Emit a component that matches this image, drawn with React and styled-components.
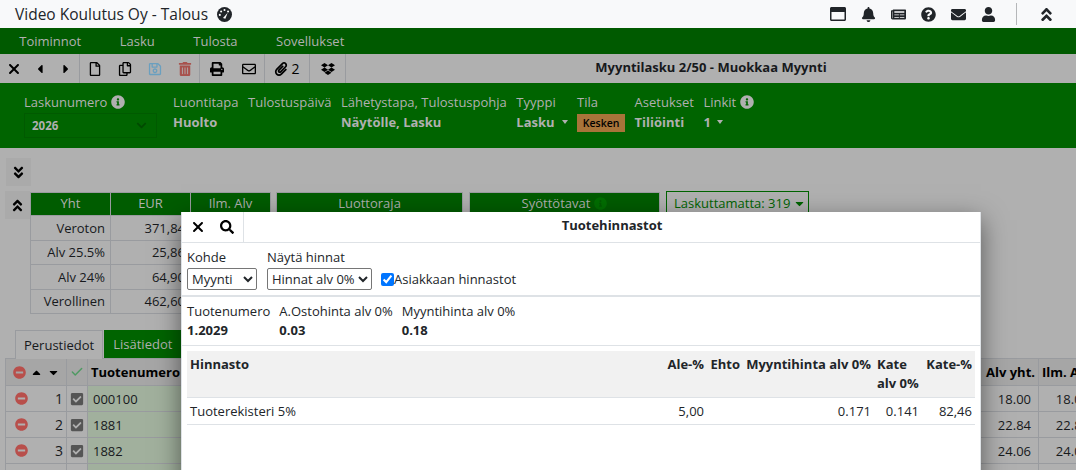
import React from 'react'
import styled, {createGlobalStyle} from 'styled-components'
import {
    FaRegWindowMaximize, FaBell, FaNewspaper, FaQuestionCircle, FaEnvelope, FaUser,
    FaAngleDoubleUp, FaAngleDoubleDown, FaCaretLeft, FaCaretRight, FaRegFile, FaRegCopy, FaRegSave,
    FaTrashAlt, FaPrint, FaRegEnvelope, FaPaperclip, FaDropbox, FaInfoCircle, FaCaretDown, FaCaretUp,
    FaSearch, FaMinusCircle, FaCheckSquare, FaChevronDown
} from 'react-icons/fa'
import {FaXmark} from 'react-icons/fa6'
import {Check} from 'lucide-react'

// everything under the top bar sits behind the modal backdrop, so the colours here are the dimmed ones
const dim = {
    page: '#b0b0b0',
    line: '#999b9f',
    head: '#a6a6a6',
    text: '#17191c',
    menu: '#005a00',
    panel: '#006400',
    tableHead: '#005c00',
    red: '#b84f4b'
}

const GlobalStyle = createGlobalStyle`
    html, body {
        margin: 0;
        padding: 0;
        overflow: hidden;
    }
    body {
        font-family: "Open Sans", "Liberation Sans", sans-serif;
        font-size: 13px;
        color: ${dim.text};
    }
    * {
        box-sizing: border-box;
    }
`

const Page = styled.div`
    position: relative;
    width: 1076px;
    height: 470px;
    overflow: hidden;
    background: ${dim.page};
`

const TopBar = styled.header`
    height: 28px;
    background: #f8f9fa;
    display: flex;
    align-items: center;
    padding-left: 15px;
`

const AppTitle = styled.div`
    font-size: 15.5px;
    color: #212529;
    display: flex;
    align-items: center;
    gap: 9px;
    flex: 1;
`

const TopIcons = styled.div`
    display: flex;
    align-items: center;
`

const TopIcon = styled.span`
    width: 30px;
    display: flex;
    justify-content: center;
    font-size: ${props => props.$size || 15}px;
    color: #212529;
`

const TopDivider = styled.div`
    width: 1px;
    height: 22px;
    background: #b5b7b9;
    margin: 0 21px 0 13px;
`

const CollapseTop = styled.span`
    display: flex;
    width: 17px;
    margin-right: 21px;
    font-size: 17px;
    color: #212529;
`

const Menu = styled.nav`
    height: 26px;
    background: ${dim.menu};
    display: flex;
    align-items: center;
`

const MenuItem = styled.span`
    color: ${dim.page};
    padding: 0 19.25px;
    font-size: 13px;
`

const Toolbar = styled.div`
    height: 29px;
    display: flex;
`

const ToolGroup = styled.div`
    display: flex;
    border-right: 1px solid ${dim.line};
`

const ToolButton = styled.span`
    width: ${props => props.$w}px;
    display: flex;
    align-items: center;
    justify-content: center;
    gap: 3px;
    font-size: ${props => props.$size || 14}px;
    color: ${props => props.$color || '#000'};
`

const ToolTitle = styled.div`
    flex: 1;
    text-align: center;
    font-weight: 700;
    line-height: 26px;
    font-size: 13px;
`

const HeaderPanel = styled.section`
    height: 65px;
    background: ${dim.panel};
    color: ${dim.page};
    display: flex;
    gap: 9.5px;
    padding: 10px 0 0 24px;
`

const Field = styled.div`
    display: flex;
    flex-direction: column;
    margin-right: ${props => props.$mr || 0}px;
`

const FieldLabel = styled.div`
    font-size: 13px;
    line-height: 18px;
    display: flex;
    align-items: center;
    gap: 4px;
    white-space: nowrap;
    svg {
        font-size: 14px;
    }
`

const FieldValue = styled.div`
    font-weight: 700;
    font-size: 13px;
    line-height: 20px;
    margin-top: 1px;
    display: flex;
    align-items: center;
    white-space: nowrap;
`

const Caret = styled.span`
    display: inline-block;
    margin-left: ${props => props.$ml || 6}px;
    border-top: 4px solid ${dim.page};
    border-left: 3.5px solid transparent;
    border-right: 3.5px solid transparent;
`

const YearSelect = styled.div`
    width: 133px;
    height: 25px;
    margin-top: 2px;
    border: 1px solid #005a00;
    display: flex;
    align-items: center;
    justify-content: space-between;
    padding: 0 9px 0 7px;
    font-size: 11.5px;
    font-weight: 700;
    svg {
        color: #004a00;
        font-size: 11px;
    }
`

const StatusBadge = styled.span`
    width: 48px;
    height: 18px;
    margin-top: 3px;
    background: #a8743a;
    color: #000;
    font-size: 10.5px;
    font-weight: 600;
    display: flex;
    align-items: center;
    justify-content: center;
`

const Content = styled.main`
    padding: 10px 0 0 5px;
`

const ChevronButton = styled.div`
    width: 25px;
    height: 28px;
    margin-left: ${props => props.$ml || 0}px;
    background: #aaaaaa;
    display: flex;
    align-items: center;
    justify-content: center;
    font-size: 15px;
    color: #000;
`

const SummaryRow = styled.div`
    display: flex;
    margin-top: 5px;
    align-items: flex-start;
`

const SummaryTable = styled.table`
    border-collapse: collapse;
    margin: 1px 5px 0 0;
    table-layout: fixed;
    width: 240px;
    td, th {
        border: 1px solid ${dim.line};
        width: 80px;
        font-size: 13px;
        padding: 0 5px;
        text-align: right;
        height: 24.5px;
        font-weight: 400;
        white-space: nowrap;
    }
    th {
        height: 23px;
        padding-bottom: 2px;
        background: ${dim.tableHead};
        color: ${dim.page};
        text-align: center;
    }
`

const SideBox = styled.div`
    width: ${props => props.$w}px;
    margin: 1px 6px 0 0;
    height: 122px;
    border: 1px solid ${dim.line};
`

const SideBoxHead = styled.div`
    height: 23px;
    padding-bottom: 3px;
    background: ${dim.tableHead};
    color: ${dim.page};
    font-size: 13px;
    display: flex;
    align-items: center;
    justify-content: center;
    gap: 4px;
    svg {
        font-size: 13px;
        color: #006e00;
    }
`

const UnbilledButton = styled.div`
    width: 143px;
    height: 26px;
    border: 1px solid ${dim.panel};
    color: ${dim.panel};
    font-size: 13px;
    display: flex;
    align-items: center;
    gap: 3px;
    padding: 0 0 2px 7px;
`

const Tabs = styled.div`
    display: flex;
    align-items: flex-end;
    gap: 1px;
    height: 29px;
    margin: 15px 0 0 10px;
`

const Tab = styled.div`
    height: ${props => props.$active ? 29 : 28}px;
    margin-bottom: ${props => props.$active ? -1 : 0}px;
    padding: 0 ${props => props.$active ? 8 : 9}px;
    display: flex;
    align-items: center;
    font-size: 13px;
    background: ${props => props.$active ? dim.page : dim.panel};
    color: ${props => props.$active ? dim.text : dim.page};
    border: ${props => props.$active ? `1px solid ${dim.line}` : 'none'};
    border-bottom: none;
`

const DataTable = styled.table`
    border-collapse: collapse;
    table-layout: fixed;
    width: 1089px;
    td, th {
        border: 1px solid ${dim.line};
        font-size: 13px;
        height: 26px;
        padding: 0 3px;
        white-space: nowrap;
        overflow: hidden;
    }
    th {
        background: ${dim.head};
        height: 27px;
        font-weight: 700;
        text-align: left;
        color: #000;
    }
    th:nth-child(4) {
        text-align: right;
    }
`

const CheckHead = styled.th`
    svg {
        display: block;
        margin: 0 auto;
        color: #4f9a63;
    }
`

const HeadControls = styled.div`
    display: flex;
    align-items: center;
    justify-content: space-between;
    padding: 0 3px 0 4px;
    font-size: 13px;
    svg:first-child {
        color: ${dim.red};
        font-size: 13px;
    }
`

const RowControls = styled.div`
    display: flex;
    align-items: center;
    justify-content: space-between;
    padding: 0 0 0 6px;
    font-size: 14px;
    svg {
        color: ${dim.red};
        font-size: 13px;
    }
`

const CheckCell = styled.td`
    text-align: center;
    svg {
        display: block;
        margin: 0 auto;
        font-size: 14px;
        color: #555;
    }
`

const InputCell = styled.td`
    background: #a1b09d;
    padding-left: 5px !important;
    font-size: 13px;
`

const NumCell = styled.td`
    text-align: right;
    padding-right: 7px !important;
    &:last-child {
        padding-right: 5px !important;
    }
`

const Modal = styled.div`
    position: absolute;
    top: 212px;
    left: 181px;
    width: 800px;
    height: 300px;
    background: #fff;
    color: #212529;
    border: 1px solid #dee2e6;
    border-top: none;
    box-shadow: 0 8px 24px rgba(0, 0, 0, 0.5);
`

const ModalHeader = styled.div`
    height: 31px;
    display: flex;
    border-bottom: 1px solid #dee2e6;
`

const ModalTools = styled.div`
    width: 62px;
    display: flex;
    align-items: center;
    border-right: 1px solid #dee2e6;
    padding-left: 8px;
    gap: 14px;
    font-size: 14px;
    color: #000;
`

const ModalTitle = styled.div`
    flex: 1;
    text-align: center;
    font-weight: 700;
    font-size: 13px;
    line-height: 27px;
`

const FilterRow = styled.div`
    height: 54px;
    display: flex;
    align-items: flex-end;
    gap: 10px;
    padding: 0 5px 5px;
    border-bottom: 2px solid #dee2e6;
`

const FilterField = styled.label`
    display: flex;
    flex-direction: column;
    font-size: 13px;
    line-height: 18px;
`

const PriceSelect = styled.select`
    width: ${props => props.$w}px;
    height: 22px;
    font-family: inherit;
    font-size: 13px;
    padding: 0;
    margin-top: 2px;
    background: #fff;
    border: 1px solid #767676;
    border-radius: 2px;
    color: #212529;
`

const CheckLabel = styled.label`
    display: flex;
    align-items: center;
    height: 22px;
    margin-left: -1px;
    font-size: 13px;
    input {
        margin: 0;
        width: 13px;
        height: 13px;
    }
`

const InfoRow = styled.div`
    height: 49px;
    display: flex;
    gap: 9px;
    padding: 5px 5px 0;
    border-bottom: 1px solid #dee2e6;
`

const InfoField = styled.div`
    font-size: 13px;
    line-height: 18px;
    b {
        display: block;
        line-height: 20px;
    }
`

const PriceWrap = styled.div`
    padding: 5px 5px 0;
`

const PriceTable = styled.table`
    width: 788px;
    border-collapse: collapse;
    table-layout: fixed;
    th {
        background: #f1f1f1;
        color: #212529;
        font-size: 13px;
        font-weight: 700;
        line-height: 19px;
        height: 46px;
        padding: 4px 3px 2px;
        vertical-align: top;
        text-align: right;
        border-bottom: 1px solid #dee2e6;
    }
    td {
        font-size: 13px;
        height: 27px;
        padding: 3px;
        text-align: right;
        border-bottom: 1px solid #dee2e6;
    }
    th:first-child, td:first-child {
        text-align: left;
    }
`

const KateHead = styled.th`
    && {
        text-align: left;
    }
`

const summary = [
    ['Veroton', '371,84'],
    ['Alv 25.5%', '25,86'],
    ['Alv 24%', '64,90'],
    ['Verollinen', '462,60']
]

const rows = [
    {n: 1, code: '000100', alv: '18.00', net: '18.00'},
    {n: 2, code: '1881', alv: '22.84', net: '22.84'},
    {n: 3, code: '1882', alv: '24.06', net: '24.06'},
    {n: 4, code: '1883', alv: '24.06', net: '24.06'}
]

function DashIcon() {
    return (
        <svg width="15" height="15" viewBox="0 0 16 16">
            <circle cx="8" cy="8" r="8" fill="#212529" />
            <circle cx="8" cy="3.2" r="1.1" fill="#fff" />
            <circle cx="4.4" cy="4.8" r="1.1" fill="#fff" />
            <circle cx="11.8" cy="4.8" r="1.1" fill="#fff" />
            <circle cx="3" cy="8.4" r="1.1" fill="#fff" />
            <path d="M6.4 11.8 L11.4 6 L8.9 12.6 Z" fill="#fff" />
        </svg>
    )
}

function App() {
    return (
        <Page>
            <GlobalStyle />
            <TopBar>
                <AppTitle>Video Koulutus Oy - Talous <DashIcon /></AppTitle>
                <TopIcons>
                    <TopIcon $size={16}><FaRegWindowMaximize /></TopIcon>
                    <TopIcon><FaBell /></TopIcon>
                    <TopIcon><FaNewspaper /></TopIcon>
                    <TopIcon><FaQuestionCircle /></TopIcon>
                    <TopIcon><FaEnvelope /></TopIcon>
                    <TopIcon><FaUser /></TopIcon>
                </TopIcons>
                <TopDivider />
                <CollapseTop><FaAngleDoubleUp /></CollapseTop>
            </TopBar>

            <Menu>
                <MenuItem>Toiminnot</MenuItem>
                <MenuItem>Lasku</MenuItem>
                <MenuItem>Tulosta</MenuItem>
                <MenuItem>Sovellukset</MenuItem>
            </Menu>

            <Toolbar>
                <ToolGroup>
                    <ToolButton $w={27} $size={16}><FaXmark /></ToolButton>
                    <ToolButton $w={26}><FaCaretLeft /></ToolButton>
                    <ToolButton $w={26}><FaCaretRight /></ToolButton>
                </ToolGroup>
                <ToolGroup>
                    <ToolButton $w={30}><FaRegFile /></ToolButton>
                    <ToolButton $w={30}><FaRegCopy /></ToolButton>
                    <ToolButton $w={30} $color="#6a9fbf"><FaRegSave /></ToolButton>
                    <ToolButton $w={29} $color="#a8524d"><FaTrashAlt /></ToolButton>
                </ToolGroup>
                <ToolGroup>
                    <ToolButton $w={33}><FaPrint /></ToolButton>
                    <ToolButton $w={31}><FaRegEnvelope /></ToolButton>
                </ToolGroup>
                <ToolGroup>
                    <ToolButton $w={44}><FaPaperclip />2</ToolButton>
                </ToolGroup>
                <ToolGroup>
                    <ToolButton $w={35}><FaDropbox /></ToolButton>
                </ToolGroup>
                <ToolTitle>Myyntilasku 2/50 - Muokkaa Myynti</ToolTitle>
            </Toolbar>

            <HeaderPanel>
                <Field $mr={6.5}>
                    <FieldLabel>Laskunumero <FaInfoCircle /></FieldLabel>
                    <YearSelect>2026 <FaChevronDown /></YearSelect>
                </Field>
                <Field>
                    <FieldLabel>Luontitapa</FieldLabel>
                    <FieldValue>Huolto</FieldValue>
                </Field>
                <Field>
                    <FieldLabel>Tulostuspäivä</FieldLabel>
                </Field>
                <Field>
                    <FieldLabel>Lähetystapa, Tulostuspohja</FieldLabel>
                    <FieldValue>Näytölle, Lasku</FieldValue>
                </Field>
                <Field>
                    <FieldLabel>Tyyppi</FieldLabel>
                    <FieldValue>Lasku<Caret $ml={7} /></FieldValue>
                </Field>
                <Field>
                    <FieldLabel>Tila</FieldLabel>
                    <StatusBadge>Kesken</StatusBadge>
                </Field>
                <Field>
                    <FieldLabel>Asetukset</FieldLabel>
                    <FieldValue>Tiliöinti</FieldValue>
                </Field>
                <Field>
                    <FieldLabel>Linkit <FaInfoCircle /></FieldLabel>
                    <FieldValue>1<Caret /></FieldValue>
                </Field>
            </HeaderPanel>

            <Content>
                <ChevronButton $ml={1}><FaAngleDoubleDown /></ChevronButton>
                <SummaryRow>
                    <ChevronButton><FaAngleDoubleUp /></ChevronButton>
                    <SummaryTable>
                        <thead>
                            <tr><th>Yht</th><th>EUR</th><th>Ilm. Alv</th></tr>
                        </thead>
                        <tbody>
                            {summary.map(([label, value]) => (
                                <tr key={label}><td>{label}</td><td>{value}</td><td></td></tr>
                            ))}
                        </tbody>
                    </SummaryTable>
                    <SideBox $w={187}>
                        <SideBoxHead>Luottoraja</SideBoxHead>
                    </SideBox>
                    <SideBox $w={191}>
                        <SideBoxHead>Syöttötavat <FaInfoCircle /></SideBoxHead>
                    </SideBox>
                    <UnbilledButton>Laskuttamatta: 319 <FaCaretDown /></UnbilledButton>
                </SummaryRow>

                <Tabs>
                    <Tab $active>Perustiedot</Tab>
                    <Tab>Lisätiedot</Tab>
                </Tabs>
                <DataTable>
                    <colgroup>
                        <col width="61" />
                        <col width="21" />
                        <col width="893" />
                        <col width="58" />
                        <col width="56" />
                    </colgroup>
                    <thead>
                        <tr>
                            <th>
                                <HeadControls><FaMinusCircle /><FaCaretUp /><FaCaretDown /></HeadControls>
                            </th>
                            <CheckHead><Check size={14} strokeWidth={2.5} /></CheckHead>
                            <th>Tuotenumero</th>
                            <th>Alv yht.</th>
                            <th>Ilm. Alv</th>
                        </tr>
                    </thead>
                    <tbody>
                        {rows.map(row => (
                            <tr key={row.n}>
                                <td><RowControls><FaMinusCircle />{row.n}</RowControls></td>
                                <CheckCell><FaCheckSquare /></CheckCell>
                                <InputCell>{row.code}</InputCell>
                                <NumCell>{row.alv}</NumCell>
                                <NumCell>{row.net}</NumCell>
                            </tr>
                        ))}
                    </tbody>
                </DataTable>
            </Content>

            <Modal>
                <ModalHeader>
                    <ModalTools><FaXmark size={16} /><FaSearch /></ModalTools>
                    <ModalTitle>Tuotehinnastot</ModalTitle>
                </ModalHeader>
                <FilterRow>
                    <FilterField>
                        Kohde
                        <PriceSelect $w={70} defaultValue="Myynti">
                            <option>Myynti</option>
                        </PriceSelect>
                    </FilterField>
                    <FilterField>
                        Näytä hinnat
                        <PriceSelect $w={105} defaultValue="Hinnat alv 0%">
                            <option>Hinnat alv 0%</option>
                        </PriceSelect>
                    </FilterField>
                    <CheckLabel><input type="checkbox" defaultChecked />Asiakkaan hinnastot</CheckLabel>
                </FilterRow>
                <InfoRow>
                    <InfoField>Tuotenumero<b>1.2029</b></InfoField>
                    <InfoField>A.Ostohinta alv 0%<b>0.03</b></InfoField>
                    <InfoField>Myyntihinta alv 0%<b>0.18</b></InfoField>
                </InfoRow>
                <PriceWrap>
                    <PriceTable>
                        <colgroup>
                            <col />
                            <col width="43" />
                            <col width="36" />
                            <col width="131" />
                            <col width="48" />
                            <col width="53" />
                        </colgroup>
                        <thead>
                            <tr>
                                <th>Hinnasto</th>
                                <th>Ale-%</th>
                                <th>Ehto</th>
                                <th>Myyntihinta alv 0%</th>
                                <KateHead>Kate alv 0%</KateHead>
                                <th>Kate-%</th>
                            </tr>
                        </thead>
                        <tbody>
                            <tr>
                                <td>Tuoterekisteri 5%</td>
                                <td>5,00</td>
                                <td></td>
                                <td>0.171</td>
                                <td>0.141</td>
                                <td>82,46</td>
                            </tr>
                        </tbody>
                    </PriceTable>
                </PriceWrap>
            </Modal>
        </Page>
    )
}

export default App
